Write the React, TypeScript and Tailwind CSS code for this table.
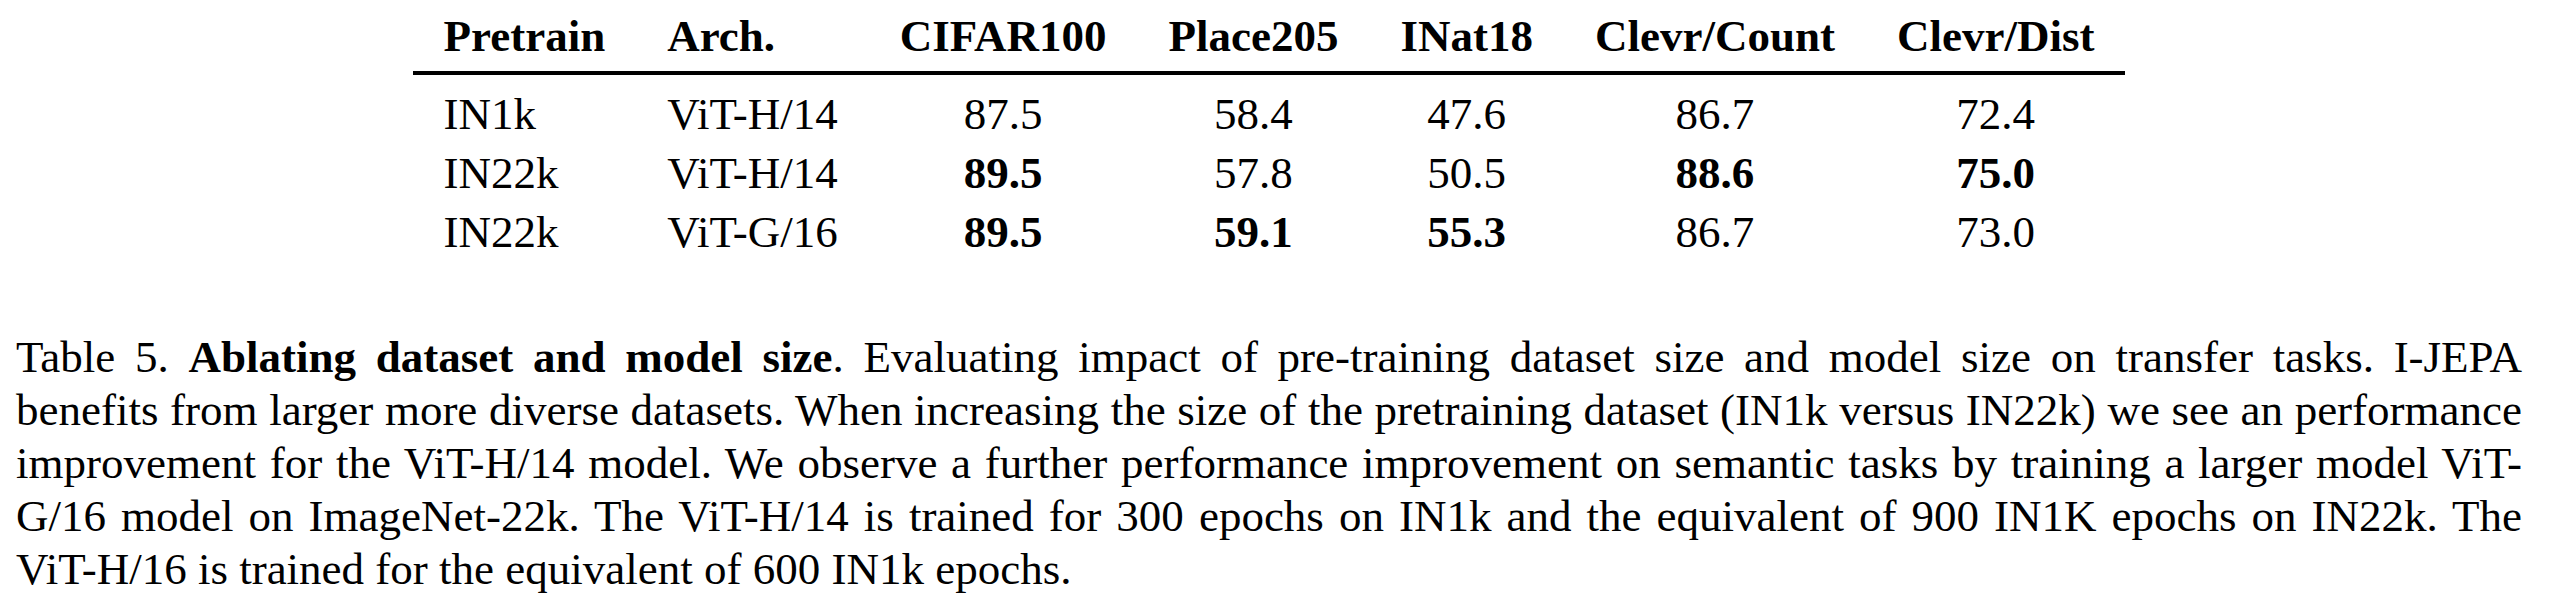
import React from "react";

const headers = ["Pretrain", "Arch.", "CIFAR100", "Place205", "INat18", "Clevr/Count", "Clevr/Dist"];

type Cell = { v: string; b?: boolean };

const rows: Cell[][] = [
  [{ v: "IN1k" }, { v: "ViT-H/14" }, { v: "87.5" }, { v: "58.4" }, { v: "47.6" }, { v: "86.7" }, { v: "72.4" }],
  [{ v: "IN22k" }, { v: "ViT-H/14" }, { v: "89.5", b: true }, { v: "57.8" }, { v: "50.5" }, { v: "88.6", b: true }, { v: "75.0", b: true }],
  [{ v: "IN22k" }, { v: "ViT-G/16" }, { v: "89.5", b: true }, { v: "59.1", b: true }, { v: "55.3", b: true }, { v: "86.7" }, { v: "73.0" }],
];

const App = () => {
  return (
    <div className="h-[596px] w-[2564px] overflow-hidden bg-white text-black font-['Liberation_Serif','Times_New_Roman',serif]">
      <div className="ml-[16px] w-[2506px]">
        <table className="mx-auto border-collapse text-[45px] leading-[45px]">
          <thead>
            <tr>
              {headers.map((h, i) => (
                <th
                  key={h}
                  className={`px-[31px] pt-[14px] pb-[12px] border-b-[4px] border-black font-bold ${
                    i < 2 ? "text-left" : "text-center"
                  }`}
                >
                  {h}
                </th>
              ))}
            </tr>
          </thead>
          <tbody>
            {rows.map((r, ri) => (
              <tr key={ri}>
                {r.map((c, ci) => (
                  <td
                    key={ci}
                    className={`px-[31px] pb-[7px] ${ri === 0 ? "pt-[17px]" : "pt-[7px]"} ${
                      ci < 2 ? "text-left" : "text-center"
                    } ${c.b ? "font-bold" : "font-normal"}`}
                  >
                    {c.v}
                  </td>
                ))}
              </tr>
            ))}
          </tbody>
        </table>

        {/* caption, lines broken as in the paper */}
        <div className="mt-[69px] text-[45px] leading-[53px]">
          <div className="text-justify [text-align-last:justify]">
            Table 5. <span className="font-bold">Ablating dataset and model size</span>. Evaluating impact of
            pre-training dataset size and model size on transfer tasks. I-JEPA
          </div>
          <div className="text-justify [text-align-last:justify]">
            benefits from larger more diverse datasets. When increasing the size of the pretraining dataset (IN1k
            versus IN22k) we see an performance
          </div>
          <div className="text-justify [text-align-last:justify]">
            improvement for the ViT-H/14 model. We observe a further performance improvement on semantic tasks by
            training a larger model ViT-
          </div>
          <div className="text-justify [text-align-last:justify]">
            G/16 model on ImageNet-22k. The ViT-H/14 is trained for 300 epochs on IN1k and the equivalent of 900
            IN1K epochs on IN22k. The
          </div>
          <div>ViT-H/16 is trained for the equivalent of 600 IN1k epochs.</div>
        </div>
      </div>
    </div>
  );
};

export default App;
